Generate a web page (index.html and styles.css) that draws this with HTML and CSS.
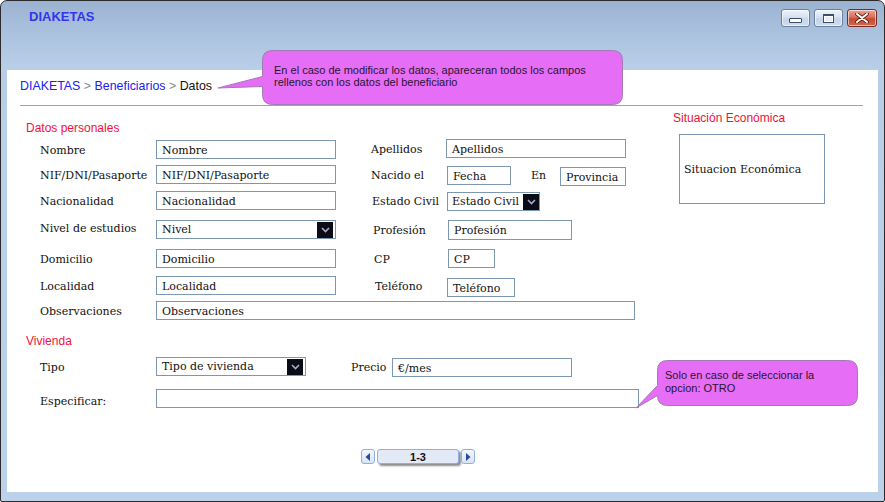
FILE: index.html
```html
<!DOCTYPE html>
<html lang="es">
<head>
<meta charset="utf-8">
<title>DIAKETAS</title>
<link rel="stylesheet" href="styles.css">
</head>
<body>
<div class="window">
  <div class="titlebar">
    <div class="title">DIAKETAS</div>
    <div class="controls">
      <span class="wbtn min"><i></i></span>
      <span class="wbtn max"><i></i></span>
      <span class="wbtn close">
        <svg width="14" height="10" viewBox="0 0 14 10"><path d="M2 1 L12 9 M12 1 L2 9" stroke="#5a1a10" stroke-width="3.6" stroke-linecap="round"/><path d="M2 1 L12 9 M12 1 L2 9" stroke="#fff" stroke-width="2" stroke-linecap="round"/></svg>
      </span>
    </div>
  </div>
  <div class="content">
    <div class="crumbs"><span class="link">DIAKETAS</span> <span class="sep">&gt;</span> <span class="link">Beneficiarios</span> <span class="sep">&gt;</span> Datos</div>
    <div class="rule"></div>
    <div class="main">
      <div class="form">
        <div class="section">Datos personales</div>
        <div class="row r1">
          <span class="lbl">Nombre</span><span class="in w180">Nombre</span>
          <span class="lbl2 ml35 w75 up1">Apellidos</span><span class="in w180 up1">Apellidos</span>
        </div>
        <div class="row r2">
          <span class="lbl">NIF/DNI/Pasaporte</span><span class="in w180">NIF/DNI/Pasaporte</span>
          <span class="lbl2 ml35 w76">Nacido el</span><span class="in w64 dn1">Fecha</span>
          <span class="lbl2 ml20 w29">En</span><span class="in w66 dn2">Provincia</span>
        </div>
        <div class="row r3">
          <span class="lbl">Nacionalidad</span><span class="in w180">Nacionalidad</span>
          <span class="lbl2 ml36 w75">Estado Civil</span><span class="in sel w93 dn1 tight">Estado Civil<b class="arrow"><svg width="9" height="6" viewBox="0 0 9 6"><path d="M1 1 L4.5 4.5 L8 1" fill="none" stroke="#9fb0c8" stroke-width="1.6"/></svg></b></span>
        </div>
        <div class="row r4">
          <span class="lbl up2">Nivel de estudios</span><span class="in sel w180">Nivel<b class="arrow"><svg width="9" height="6" viewBox="0 0 9 6"><path d="M1 1 L4.5 4.5 L8 1" fill="none" stroke="#9fb0c8" stroke-width="1.6"/></svg></b></span>
          <span class="lbl2 ml37 w75">Profesión</span><span class="in w124 h20">Profesión</span>
        </div>
        <div class="row r5">
          <span class="lbl">Domicilio</span><span class="in w180">Domicilio</span>
          <span class="lbl2 ml38 w74">CP</span><span class="in w47">CP</span>
        </div>
        <div class="row r6">
          <span class="lbl">Localidad</span><span class="in w180">Localidad</span>
          <span class="lbl2 ml39 w72">Teléfono</span><span class="in w68 dn2">Teléfono</span>
        </div>
        <div class="row r7">
          <span class="lbl">Observaciones</span><span class="in w479">Observaciones</span>
        </div>
        <div class="section s2">Vivienda</div>
        <div class="row r8">
          <span class="lbl">Tipo</span><span class="in sel w150">Tipo de vivienda<b class="arrow"><svg width="9" height="6" viewBox="0 0 9 6"><path d="M1 1 L4.5 4.5 L8 1" fill="none" stroke="#9fb0c8" stroke-width="1.6"/></svg></b></span>
          <span class="lbl2 ml45 w41">Precio</span><span class="in w180 dn1">€/mes</span>
        </div>
        <div class="row r9">
          <span class="lbl dn2">Especificar:</span><span class="in w483"></span>
        </div>
        <div class="pager">
          <span class="pbtn"><svg width="6" height="8" viewBox="0 0 6 8"><path d="M5 0 L0.5 4 L5 8 Z" fill="#2a4aa0"/></svg></span>
          <span class="pmid">1-3</span>
          <span class="pbtn"><svg width="6" height="8" viewBox="0 0 6 8"><path d="M1 0 L5.5 4 L1 8 Z" fill="#2a4aa0"/></svg></span>
        </div>
      </div>
      <div class="side">
        <div class="section side-title">Situación Económica</div>
        <div class="sbox">Situacion Económica</div>
      </div>
    </div>
  </div>

  <div class="callout c1">
    <svg width="412" height="57" viewBox="0 0 412 57"><path d="M60.5 1.5 H400.5 Q410.5 1.5 410.5 11.5 V45.5 Q410.5 55.5 400.5 55.5 H60.5 Q50.5 55.5 50.5 45.5 V37.5 L6 39 L50.5 27.5 V11.5 Q50.5 1.5 60.5 1.5 Z" fill="#e66ef6" stroke="#a27ab4" stroke-width="1"/></svg>
    <div class="ctext">En el caso de modificar los datos, apareceran todos los campos<br>rellenos con los datos del beneficiario</div>
  </div>
  <div class="callout c2">
    <svg width="228" height="52" viewBox="0 0 228 52"><path d="M35.5 2.5 H215.5 Q225.5 2.5 225.5 12.5 V37.5 Q225.5 47.5 215.5 47.5 H35.5 Q25.5 47.5 25.5 37.5 L4 50 L25.5 27.5 V12.5 Q25.5 2.5 35.5 2.5 Z" fill="#e66ef6" stroke="#a27ab4" stroke-width="1"/></svg>
    <div class="ctext">Solo en caso de seleccionar la<br>opcion: OTRO</div>
  </div>
</div>
</body>
</html>
```

FILE: styles.css
```css
html, body {
  margin: 0;
  padding: 0;
  background: #fff;
}
body {
  width: 885px;
  height: 502px;
  overflow: hidden;
  font-family: "Liberation Sans", Arial, sans-serif;
}
.window {
  position: relative;
  box-sizing: border-box;
  width: 885px;
  height: 502px;
  border: 1px solid #2b2b2b;
  border-radius: 7px 7px 2px 2px;
  background: linear-gradient(180deg, #9bb3d1 0px, #aac1de 30px, #b9cfe8 68px, #bcd2ea 100%);
  display: flex;
  flex-direction: column;
  padding: 0 6px 9px 6px;
}
.titlebar {
  height: 69px;
  display: flex;
  align-items: flex-start;
  justify-content: space-between;
}
.title {
  margin: 8px 0 0 22px;
  font-weight: bold;
  font-size: 13px;
  line-height: 16px;
  color: #3434f0;
}
.controls {
  display: flex;
  gap: 4px;
  margin: 8px 1px 0 0;
}
.wbtn {
  box-sizing: border-box;
  width: 29px;
  height: 18px;
  border: 1px solid #6a7f9c;
  border-radius: 3px;
  background: linear-gradient(180deg, #eef3fa 0%, #d6e2f1 45%, #c3d4ea 55%, #cfdcee 100%);
  display: flex;
  align-items: center;
  justify-content: center;
  box-shadow: inset 0 0 0 1px rgba(255,255,255,0.6);
}
.wbtn.min i {
  display: block;
  width: 11px;
  height: 3px;
  margin-top: 5px;
  background: #fff;
  border: 1px solid #3d4e66;
  border-radius: 1px;
}
.wbtn.max i {
  display: block;
  width: 9px;
  height: 6px;
  border: 1px solid #3d4e66;
  background: #e9eef6;
  box-shadow: inset 0 0 0 1px #fff;
  border-top-width: 2px;
}
.wbtn.close {
  width: 30px;
  border-color: #7a2a1e;
  background: linear-gradient(180deg, #eaa393 0%, #d9705c 45%, #c74a32 55%, #d3654c 100%);
}
.content {
  flex: 1;
  background: #fff;
  padding-left: 13px;
  position: relative;
}
.crumbs {
  padding-top: 8px;
  font-size: 12.4px;
  line-height: 16px;
  color: #111;
  height: 16px;
}
.crumbs .link { color: #2020f0; }
.crumbs .sep { color: #888; }
.rule {
  margin-top: 11px;
  width: 843px;
  height: 1px;
  background: #a6a399;
}
.main {
  display: flex;
}
.form {
  margin-left: 6px;
  width: 647px;
}
.section {
  margin-top: 15px;
  font-size: 12px;
  line-height: 14px;
  color: #f2103a;
}
.section.s2 { margin-top: 14px; }
.row {
  display: flex;
  align-items: center;
  height: 19px;
  padding-left: 14px;
  font-family: "DejaVu Serif", serif;
  font-size: 11px;
  color: #111;
}
.row .lbl, .row .lbl2 { position: relative; top: 1px; }
.r1 { margin-top: 5px; }
.r2 { margin-top: 6px; }
.r3 { margin-top: 7px; }
.r4 { margin-top: 10px; }
.r5 { margin-top: 10px; }
.r6 { margin-top: 8px; }
.r7 { margin-top: 6px; }
.r8 { margin-top: 9px; }
.r9 { margin-top: 13px; }
.lbl { width: 116px; white-space: nowrap; }
.lbl2 { white-space: nowrap; }
.in {
  box-sizing: border-box;
  height: 19px;
  border: 1px solid #7c97b3;
  padding: 1px 0 0 5px;
  display: flex;
  align-items: center;
  white-space: nowrap;
  overflow: hidden;
  background: #fff;
}
.sel { justify-content: space-between; padding: 0 2px 0 5px; }
.sel.tight { padding-left: 4px; padding-right: 0; }
.arrow {
  display: flex;
  align-items: center;
  justify-content: center;
  width: 16px;
  height: 16px;
  background: #0c0c16;
  flex: none;
}
.w29 { width: 29px; }
.w41 { width: 41px; }
.w47 { width: 47px; }
.w64 { width: 64px; }
.w66 { width: 66px; }
.w68 { width: 68px; }
.w72 { width: 72px; }
.w74 { width: 74px; }
.w75 { width: 75px; }
.w76 { width: 76px; }
.w93 { width: 93px; }
.w124 { width: 124px; }
.w150 { width: 150px; }
.w180 { width: 180px; }
.w479 { width: 479px; }
.w483 { width: 483px; }
.h20 { height: 20px; }
.ml20 { margin-left: 20px; }
.ml35 { margin-left: 35px; }
.ml36 { margin-left: 36px; }
.ml37 { margin-left: 37px; }
.ml38 { margin-left: 38px; }
.ml39 { margin-left: 39px; }
.ml45 { margin-left: 45px; }
.up1 { margin-top: -2px; }
.up2 { margin-top: -4px; }
.dn1 { margin-top: 2px; }
.dn2 { margin-top: 4px; }
.pager {
  margin: 41px 0 0 335px;
  display: flex;
  align-items: center;
  gap: 1px;
  height: 15px;
}
.pbtn {
  box-sizing: border-box;
  width: 14px;
  height: 15px;
  border: 1px solid #8fb0e0;
  border-radius: 3px;
  background: linear-gradient(180deg, #f2f6fc, #d9e4f4);
  display: flex;
  align-items: center;
  justify-content: center;
}
.pmid {
  box-sizing: border-box;
  width: 82px;
  height: 15px;
  border: 1px solid #8fb0e0;
  border-radius: 3px;
  background: #e3e9f6;
  box-shadow: 2px 2px 2px rgba(0,0,0,0.45);
  margin: 0 1px;
  font-size: 11px;
  font-weight: bold;
  color: #111;
  display: flex;
  align-items: center;
  justify-content: center;
}
.side {
  display: flex;
  flex-direction: column;
}
.side-title { margin-top: 5px; }
.sbox {
  box-sizing: border-box;
  margin: 9px 0 0 6px;
  width: 146px;
  height: 70px;
  border: 1px solid #7c97b3;
  padding: 1px 0 0 4px;
  display: flex;
  align-items: center;
  font-family: "DejaVu Serif", serif;
  font-size: 11px;
  color: #111;
}
.callout {
  position: absolute;
}
.callout svg { display: block; }
.callout .ctext {
  position: absolute;
  font-size: 11px;
  line-height: 12px;
  color: #2a1430;
  white-space: nowrap;
}
.c1 { left: 211px; top: 48px; }
.c1 .ctext { left: 62px; top: 15px; }
.c2 { left: 631px; top: 357px; }
.c2 .ctext { left: 33px; top: 11px; line-height: 13px; }
```
